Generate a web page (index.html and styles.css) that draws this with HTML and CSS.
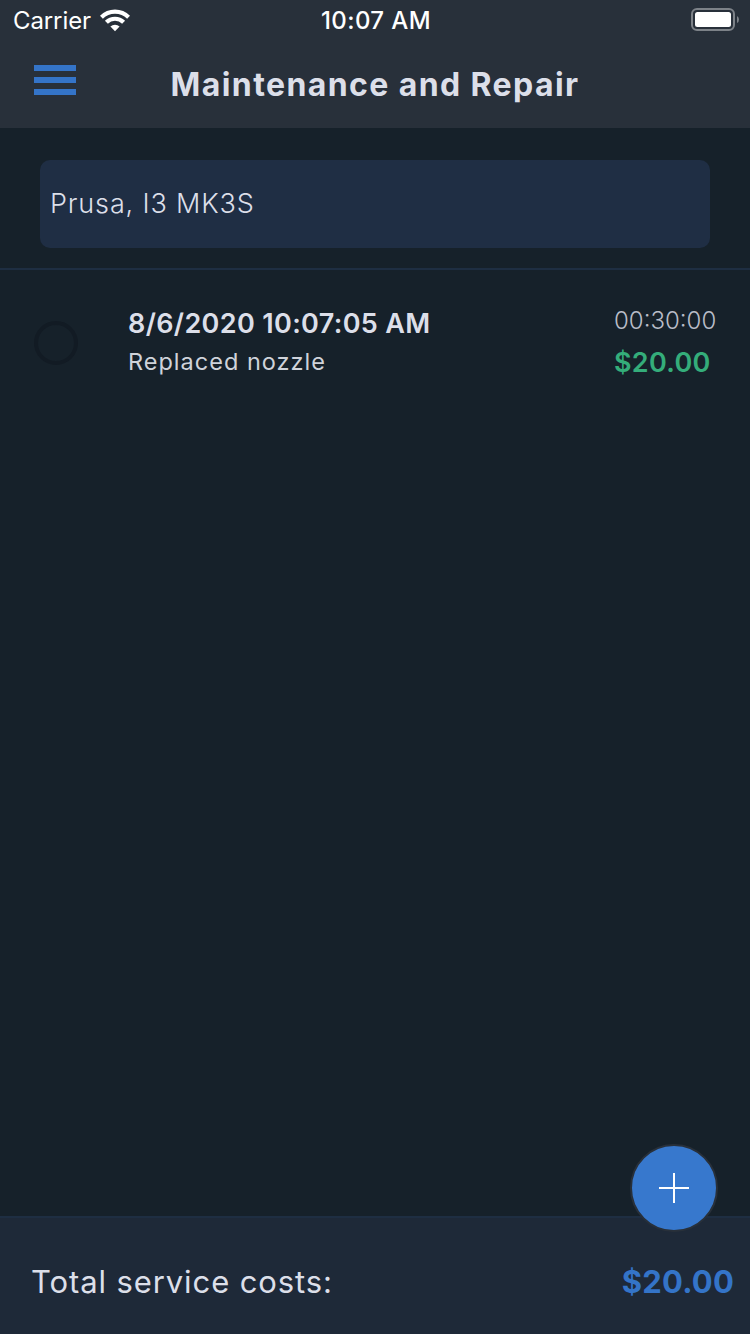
FILE: index.html
```html
<!DOCTYPE html>
<html lang="en">
<head>
    <meta charset="UTF-8">
    <meta name="viewport" content="width=device-width, initial-scale=1.0">
    <title>Maintenance and Repair</title>
    <link rel="stylesheet" href="styles.css">
</head>
<body>
    <header>
        <div class="status-bar">
            <div class="carrier">
                <span class="carrier-name">Carrier</span>
                <svg class="wifi" width="30" height="23" viewBox="0 0 30 23">
                    <g fill="none" stroke="#fff" stroke-width="4.2">
                        <path d="M1.4 8.2 A19.2 19.2 0 0 1 28.6 8.2"/>
                        <path d="M6.4 13.3 A12.2 12.2 0 0 1 23.6 13.3"/>
                    </g>
                    <path d="M10.4 17.4 A7 7 0 0 1 19.6 17.4 L15 22.2 Z" fill="#fff"/>
                </svg>
            </div>
            <span class="clock">10:07 AM</span>
            <div class="battery-wrap">
                <svg width="49" height="24" viewBox="0 0 49 24">
                    <rect x="1" y="1" width="42" height="21" rx="5" fill="none" stroke="#7d8288" stroke-width="2"/>
                    <rect x="4" y="4" width="36" height="15" rx="2.5" fill="#fff"/>
                    <path d="M46 8 Q48 9 48 11.5 Q48 14 46 15 Z" fill="#7d8288"/>
                </svg>
            </div>
        </div>
        <div class="nav-bar">
            <button class="menu-btn" aria-label="Menu">
                <span></span>
                <span></span>
                <span></span>
            </button>
            <h1>Maintenance and Repair</h1>
        </div>
    </header>

    <section class="printer">
        <div class="printer-picker">Prusa, I3 MK3S</div>
    </section>

    <main>
        <div class="record">
            <span class="check"></span>
            <div class="record-info">
                <div class="record-date">8/6/2020 10:07:05 AM</div>
                <div class="record-note">Replaced nozzle</div>
            </div>
            <div class="record-cost">
                <div class="duration">00:30:00</div>
                <div class="price">$20.00</div>
            </div>
        </div>
    </main>

    <footer>
        <button class="add-btn" aria-label="Add">
            <svg width="30" height="30" viewBox="0 0 30 30">
                <path d="M15 0 V30 M0 15 H30" stroke="#fff" stroke-width="2"/>
            </svg>
        </button>
        <span class="total-label">Total service costs:</span>
        <span class="total-price">$20.00</span>
    </footer>
</body>
</html>
```

FILE: styles.css
```css
* {
    box-sizing: border-box;
}
body {
    margin: 0;
    height: 1334px;
    display: flex;
    flex-direction: column;
    overflow: hidden;
    font-family: Inter, "Liberation Sans", sans-serif;
    background-color: #16212a;
    color: #dcdfe9;
    white-space: nowrap;
}
button {
    border: none;
    padding: 0;
    cursor: pointer;
}

/* header */
header {
    height: 128px;
    background-color: #28303a;
}
.status-bar {
    height: 40px;
    display: grid;
    grid-template-columns: 1fr auto 1fr;
    align-items: center;
    padding: 0 11px 0 13px;
    color: #fff;
    font-size: 24px;
}
.carrier {
    display: flex;
    align-items: center;
    gap: 9px;
}
.carrier-name {
    letter-spacing: -0.1px;
}
.clock {
    font-weight: 500;
    letter-spacing: 0.4px;
}
.battery-wrap {
    display: flex;
    justify-content: flex-end;
    margin-right: -1px;
}
.nav-bar {
    height: 88px;
    display: grid;
    grid-template-columns: 42px 1fr 42px;
    align-items: center;
    padding: 0 34px;
}
.menu-btn {
    display: flex;
    flex-direction: column;
    gap: 6px;
    margin-bottom: 8px;
    background: none;
}
.menu-btn span {
    width: 42px;
    height: 6px;
    background-color: #3474c8;
}
h1 {
    margin: 0;
    text-align: center;
    font-size: 32px;
    font-weight: 700;
    letter-spacing: 1.4px;
}

/* printer selector */
.printer {
    height: 142px;
    padding: 32px 40px 0;
    border-bottom: 2px solid #1e2e42;
}
.printer-picker {
    height: 88px;
    padding-left: 10px;
    line-height: 87px;
    border-radius: 10px;
    background-color: #1f2e44;
    font-size: 27px;
    font-weight: 300;
    letter-spacing: 0.85px;
}

/* records */
main {
    flex: 1;
}
.record {
    display: grid;
    grid-template-columns: 94px 1fr 120px;
    padding: 33px 16px 0 34px;
}
.check {
    width: 44px;
    height: 44px;
    margin-top: 18px;
    border: 4px solid #121b24;
    border-radius: 50%;
}
.record-date {
    line-height: 41px;
    font-size: 27px;
    font-weight: 600;
    letter-spacing: 0.35px;
}
.record-note {
    line-height: 35px;
    font-size: 23.5px;
    color: #cfd3da;
    letter-spacing: 1px;
}
.duration {
    line-height: 36px;
    font-size: 24px;
    font-weight: 300;
    color: #b9bdc8;
}
.price {
    line-height: 48px;
    font-size: 27px;
    font-weight: 600;
    color: #34ad7a;
    letter-spacing: 0.3px;
}

/* footer */
footer {
    position: relative;
    height: 118px;
    display: flex;
    justify-content: space-between;
    align-items: center;
    padding: 10px 16px 0 31px;
    border-top: 2px solid #1e2e42;
    background-color: #1e2938;
}
.add-btn {
    position: absolute;
    top: -74px;
    right: 32px;
    width: 88px;
    height: 88px;
    display: flex;
    justify-content: center;
    align-items: center;
    border: 2px solid #28303a;
    border-radius: 50%;
    background-color: #3778cd;
}
.total-label {
    font-size: 31px;
    letter-spacing: 0.9px;
}
.total-price {
    font-size: 31px;
    font-weight: 700;
    color: #3474c8;
    letter-spacing: 0.2px;
}
```
